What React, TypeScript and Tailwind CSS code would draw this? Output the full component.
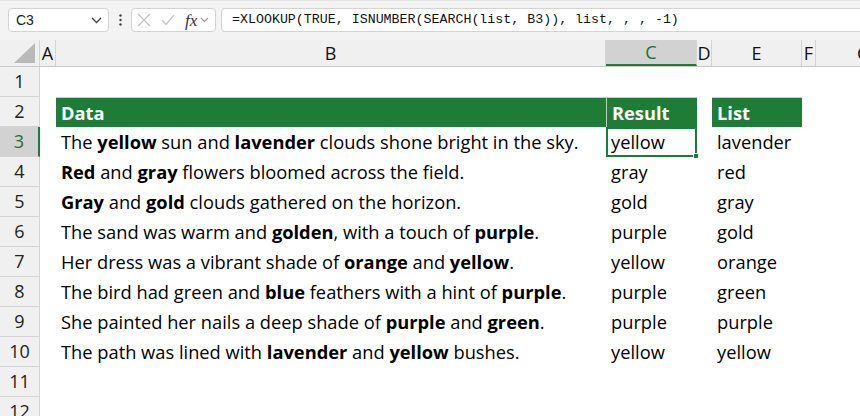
import React from 'react';

const rows: [string, string, string][] = [
  ['The **yellow** sun and **lavender** clouds shone bright in the sky.', 'yellow', 'lavender'],
  ['**Red** and **gray** flowers bloomed across the field.', 'gray', 'red'],
  ['**Gray** and **gold** clouds gathered on the horizon.', 'gold', 'gray'],
  ['The sand was warm and **golden**, with a touch of **purple**.', 'purple', 'gold'],
  ['Her dress was a vibrant shade of **orange** and **yellow**.', 'yellow', 'orange'],
  ['The bird had green and **blue** feathers with a hint of **purple**.', 'purple', 'green'],
  ['She painted her nails a deep shade of **purple** and **green**.', 'purple', 'purple'],
  ['The path was lined with **lavender** and **yellow** bushes.', 'yellow', 'yellow'],
];

const Rich = ({ text }: { text: string }) => (
  <span className="whitespace-pre">
    {text.split('**').map((part, i) =>
      i % 2 === 1 ? <b key={i} className="font-bold">{part}</b> : <React.Fragment key={i}>{part}</React.Fragment>
    )}
  </span>
);

const cols = [
  { name: 'A', w: 'w-[16px]' },
  { name: 'B', w: 'w-[550px]' },
  { name: 'C', w: 'w-[91px]' },
  { name: 'D', w: 'w-[15px]' },
  { name: 'E', w: 'w-[90px]' },
  { name: 'F', w: 'w-[14px]' },
];

const RowHead = ({ n, active }: { n: number; active?: boolean }) => (
  <div
    className={
      'w-[40px] shrink-0 h-full flex items-center justify-center border-b border-r border-[#d4d4d4] text-[18px] ' +
      (active ? 'bg-[#d2d2d2] text-[#1e6e3e] border-r-2 border-r-[#1e7c36]' : 'bg-[#f0f0f0] text-[#222]')
    }
  >
    {n}
  </div>
);

export default function App() {
  return (
    <div className="w-[860px] h-[416px] overflow-hidden bg-white font-['Open_Sans',sans-serif] text-[18.3px] text-black">
      {/* formula bar */}
      <div className="h-[40px] bg-[#f3f3f3] flex items-start pt-[7px] pl-[8px] border-t border-[#e4e4e4]">
        <div className="w-[101px] h-[24px] bg-white border border-[#d4d4d4] rounded-[4px] flex items-center justify-between pl-[7px] pr-[6px] text-[14px] font-['Liberation_Sans',sans-serif] text-[#222]">
          <span>C3</span>
          <svg width="11" height="7" viewBox="0 0 11 7"><path d="M1 1l4.5 4.5L10 1" fill="none" stroke="#444" strokeWidth="1.3" /></svg>
        </div>
        <div className="w-[22px] h-[24px] flex items-center justify-center">
          <svg width="3" height="12" viewBox="0 0 3 12"><circle cx="1.5" cy="1.5" r="1.2" fill="#444" /><circle cx="1.5" cy="6" r="1.2" fill="#444" /><circle cx="1.5" cy="10.5" r="1.2" fill="#444" /></svg>
        </div>
        <div className="w-[85px] h-[24px] bg-white border border-[#d4d4d4] rounded-[4px] flex items-center pl-[5px] gap-[10px]">
          <svg width="14" height="14" viewBox="0 0 14 14"><path d="M1 1l12 12M13 1L1 13" stroke="#c4c4c4" strokeWidth="1.2" /></svg>
          <svg width="14" height="12" viewBox="0 0 14 12"><path d="M1 6l4 4.5L13 1" fill="none" stroke="#c4c4c4" strokeWidth="1.2" /></svg>
          <div className="flex items-center gap-[3px]">
            <span className="font-['Liberation_Serif',serif] italic text-[17px] leading-none text-[#333]">fx</span>
            <svg width="9" height="6" viewBox="0 0 9 6"><path d="M1 1l3.5 3.5L8 1" fill="none" stroke="#999" strokeWidth="1.1" /></svg>
          </div>
        </div>
        <div className="ml-[5px] flex-1 h-[24px] bg-white border border-r-0 border-[#d4d4d4] rounded-l-[4px] flex items-center pl-[10px] font-['Liberation_Mono',monospace] text-[13.3px] text-[#111]">
          =XLOOKUP(TRUE, ISNUMBER(SEARCH(list, B3)), list, , , -1)
        </div>
      </div>

      {/* column headers */}
      <div className="h-[27px] flex bg-[#f0f0f0] border-b border-[#c8c8c8] text-[18px]">
        <div className="w-[40px] shrink-0 border-r border-[#d4d4d4] flex items-end justify-end pr-[4px] pb-[3px]">
          <svg width="21" height="20" viewBox="0 0 21 20"><path d="M21 0V20H0Z" fill="#b9b9b9" /></svg>
        </div>
        {cols.map((c) => (
          <div
            key={c.name}
            className={
              c.w +
              ' shrink-0 flex items-center justify-center border-r border-[#d4d4d4] ' +
              (c.name === 'C' ? 'bg-[#d2d2d2] text-[#1e6e3e] border-b-2 border-b-[#1e7c36]' : 'text-[#111]')
            }
          >
            {c.name}
          </div>
        ))}
        <div className="flex-1 flex items-center pl-[41px] text-[#111] whitespace-nowrap">G</div>
      </div>

      {/* row 1 */}
      <div className="h-[30px] flex">
        <RowHead n={1} />
      </div>

      {/* row 2: headers */}
      <div className="h-[30px] flex">
        <RowHead n={2} />
        <div className="w-[16px] shrink-0" />
        <div className="w-[550px] shrink-0 bg-[#1e7c36] text-white font-bold pl-[5px] flex items-center border-t border-[#c8c8c8]">Data</div>
        <div className="w-[91px] shrink-0 bg-[#1e7c36] text-white font-bold pl-[5px] flex items-center border-t border-l border-[#c8c8c8]">Result</div>
        <div className="w-[15px] shrink-0" />
        <div className="w-[90px] shrink-0 bg-[#1e7c36] text-white font-bold pl-[5px] flex items-center border-t border-[#c8c8c8]">List</div>
      </div>

      {rows.map(([text, res, list], i) => (
        <div key={i} className="h-[30px] flex">
          <RowHead n={i + 3} active={i === 0} />
          <div className="w-[16px] shrink-0" />
          <div className="w-[550px] shrink-0 pl-[5px] flex items-center whitespace-nowrap">
            <Rich text={text} />
          </div>
          <div
            className={
              'w-[91px] shrink-0 flex items-center relative ' +
              (i === 0 ? 'border-2 border-[#1e7c36] pl-[3px]' : 'pl-[5px]')
            }
          >
            {res}
            {i === 0 && <div className="absolute right-[-4px] bottom-[-4px] w-[6px] h-[6px] bg-[#1e7c36] border border-white" />}
          </div>
          <div className="w-[15px] shrink-0" />
          <div className="w-[90px] shrink-0 pl-[5px] flex items-center">{list}</div>
        </div>
      ))}

      <div className="h-[30px] flex">
        <RowHead n={11} />
      </div>
      <div className="h-[30px] flex">
        <RowHead n={12} />
      </div>
    </div>
  );
}
